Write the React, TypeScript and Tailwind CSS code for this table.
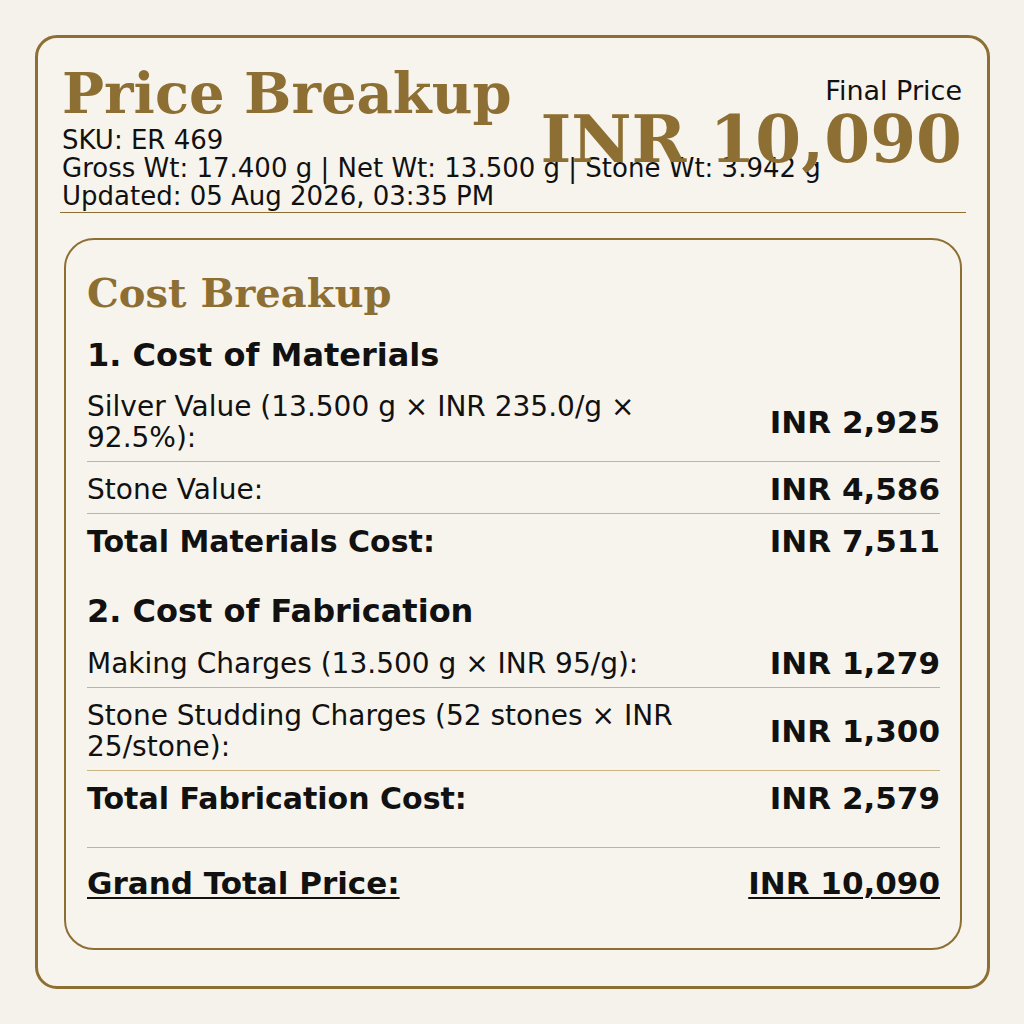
const gold = "text-[#8d6f33]";

function Row({
  label,
  value,
  total = false,
  divider = true,
}: {
  label: string;
  value: string;
  total?: boolean;
  divider?: boolean;
}) {
  return (
    <div className={`flex items-center justify-between gap-6 pb-[8px] pt-[12px] ${divider ? "border-b border-[#c9b584]" : ""}`}>
      <p className={total ? "text-[30px] font-bold leading-[31px]" : "max-w-[620px] text-[28px] leading-[31px]"}>{label}</p>
      <p className="shrink-0 text-[31px] font-bold leading-[31px]">{value}</p>
    </div>
  );
}

export default function App() {
  return (
    <div className="min-h-screen bg-[#f5f2eb] pb-[35px] pl-[35px] pr-[34px] pt-[35px] font-['DejaVu_Sans',sans-serif] text-[#111]">
      <div className="h-[954px] rounded-[22px] border-[3px] border-[#8d6f33] bg-[#f7f4ee] pl-[22px] pr-[21px] pt-[24px]">
        <header className="relative border-b border-[#8d6f33] pb-[2px] pl-[2px] pr-[4px]">
          <h1 className={`font-['DejaVu_Serif',serif] text-[56px] font-bold leading-[62px] ${gold}`}>Price Breakup</h1>
          <div className="mt-[2px] whitespace-nowrap text-[26px] leading-[28px]">
            <p>SKU: ER 469</p>
            <p>Gross Wt: 17.400 g | Net Wt: 13.500 g | Stone Wt: 3.942 g</p>
            <p>Updated: 05 Aug 2026, 03:35 PM</p>
          </div>
          <div className="absolute right-[4px] top-[14px] text-right">
            <p className="text-[27px] leading-[30px]">Final Price</p>
            <p className={`font-['DejaVu_Serif',serif] text-[66px] font-bold leading-[66px] ${gold}`}>INR 10,090</p>
          </div>
        </header>

        <section className="ml-[4px] mr-[4px] mt-[25px] h-[712px] rounded-[30px] border-2 border-[#8d6f33] pl-[21px] pr-[20px] pt-[27px]">
          <h2 className={`font-['DejaVu_Serif',serif] text-[40px] font-bold leading-[52px] ${gold}`}>Cost Breakup</h2>

          <h3 className="mt-[18px] text-[32px] font-bold leading-[36px]">1. Cost of Materials</h3>
          <div className="mt-[6px]">
            <Row label="Silver Value (13.500 g × INR 235.0/g × 92.5%):" value="INR 2,925" />
            <Row label="Stone Value:" value="INR 4,586" />
            <Row label="Total Materials Cost:" value="INR 7,511" total divider={false} />
          </div>

          <h3 className="mt-[28px] text-[32px] font-bold leading-[36px]">2. Cost of Fabrication</h3>
          <div className="mt-[7px]">
            <Row label="Making Charges (13.500 g × INR 95/g):" value="INR 1,279" />
            <Row label="Stone Studding Charges (52 stones × INR 25/stone):" value="INR 1,300" />
            <Row label="Total Fabrication Cost:" value="INR 2,579" total divider={false} />
          </div>

          <div className="mt-[25px] flex items-center justify-between border-t border-[#c9b584] pt-[17px] text-[31px] font-bold leading-[36px] underline decoration-2 underline-offset-[3px]">
            <p>Grand Total Price:</p>
            <p>INR 10,090</p>
          </div>
        </section>
      </div>
    </div>
  );
}
